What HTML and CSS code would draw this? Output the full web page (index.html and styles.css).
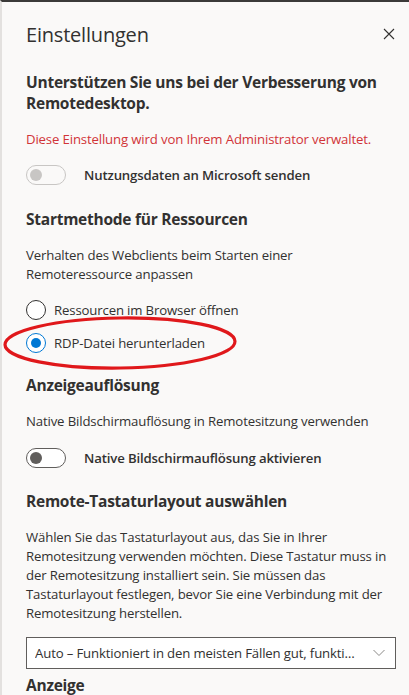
FILE: index.html
```html
<!DOCTYPE html>
<html lang="de">
<head>
<meta charset="utf-8">
<link rel="stylesheet" href="styles.css">
</head>
<body>
<div class="panel">
  <header class="head">
    <h1 class="title">Einstellungen</h1>
    <button class="close" aria-label="Schließen">
      <svg width="12" height="12" viewBox="0 0 12 12"><path d="M1 1L11 11M11 1L1 11" stroke="#323130" stroke-width="1.1" fill="none"/></svg>
    </button>
  </header>

  <h2 class="h">Unterstützen Sie uns bei der Verbesserung von Remotedesktop.</h2>
  <p class="warn">Diese Einstellung wird von Ihrem Administrator verwaltet.</p>
  <div class="toggle-row first">
    <span class="toggle disabled"><span class="thumb"></span></span>
    <span class="tlabel">Nutzungsdaten an Microsoft senden</span>
  </div>

  <h2 class="h">Startmethode für Ressourcen</h2>
  <p class="desc">Verhalten des Webclients beim Starten einer Remoteressource anpassen</p>
  <div class="radios">
    <div class="radio-row"><span class="radio"></span><span>Ressourcen im Browser öffnen</span></div>
    <div class="radio-row"><span class="radio checked"></span><span>RDP-Datei herunterladen</span>
      <svg class="ring" width="240" height="60" viewBox="0 0 240 60"><ellipse cx="118" cy="30" rx="115" ry="25" fill="none" stroke="#e0181b" stroke-width="3.2" transform="rotate(-0.8 118 30)"/></svg>
    </div>
  </div>

  <h2 class="h">Anzeigeauflösung</h2>
  <p class="desc">Native Bildschirmauflösung in Remotesitzung verwenden</p>
  <div class="toggle-row">
    <span class="toggle"><span class="thumb"></span></span>
    <span class="tlabel">Native Bildschirmauflösung aktivieren</span>
  </div>

  <h2 class="h">Remote-Tastaturlayout auswählen</h2>
  <p class="desc">Wählen Sie das Tastaturlayout aus, das Sie in Ihrer Remotesitzung verwenden möchten. Diese Tastatur muss in der Remotesitzung installiert sein. Sie müssen das Tastaturlayout festlegen, bevor Sie eine Verbindung mit der Remotesitzung herstellen.</p>
  <div class="select">
    <span class="sval">Auto – Funktioniert in den meisten Fällen gut, funkti…</span>
    <svg width="12" height="8" viewBox="0 0 12 8"><path d="M0.5 1L6 6.5L11.5 1" stroke="#8a8886" stroke-width="1" fill="none"/></svg>
  </div>

  <h2 class="h">Anzeige</h2>
</div>
</body>
</html>
```

FILE: styles.css
```css
html, body {
  margin: 0;
  padding: 0;
  height: 100%;
  overflow: hidden;
}
body {
  background: #faf9f8;
  font-family: "Open Sans", "Noto Sans", sans-serif;
  color: #323130;
  border-top: 2px solid #3b3a39;
  border-left: 2px solid #e3e1df;
  box-sizing: border-box;
}
.panel {
  padding: 0 13px 0 24px;
}
.head {
  display: flex;
  align-items: center;
  justify-content: space-between;
  height: 64px;
}
.title {
  margin: 0;
  font-size: 20px;
  font-weight: 400;
  letter-spacing: -0.2px;
}
.close {
  border: 0;
  background: transparent;
  padding: 0;
  width: 14px;
  height: 14px;
  display: flex;
  align-items: center;
  justify-content: center;
}
.h {
  margin: 6px 0 0;
  font-size: 15.5px;
  font-weight: 700;
  line-height: 21px;
  letter-spacing: -0.25px;
}
.warn {
  margin: 16px 0 0;
  font-size: 13.2px;
  line-height: 18px;
  color: #d13438;
  letter-spacing: -0.15px;
}
.desc {
  margin: 16px 0 0;
  font-size: 13.2px;
  line-height: 19px;
  letter-spacing: -0.15px;
}
.toggle-row {
  display: flex;
  align-items: center;
  gap: 18px;
  margin: 17px 0 23px;
  height: 20px;
}
.toggle-row.first {
  margin-bottom: 24px;
}
.toggle {
  box-sizing: border-box;
  width: 40px;
  height: 20px;
  border-radius: 10px;
  border: 1px solid #605e5c;
  background: #ffffff;
  display: flex;
  align-items: center;
  padding-left: 3px;
}
.toggle .thumb {
  width: 12px;
  height: 12px;
  border-radius: 50%;
  background: #605e5c;
}
.toggle.disabled {
  border-color: #c8c6c4;
  background: #faf9f8;
}
.toggle.disabled .thumb {
  background: #c8c6c4;
}
.tlabel {
  font-size: 13.2px;
  font-weight: 600;
  letter-spacing: -0.15px;
}
.radios {
  margin: 16px 0 22px;
  display: flex;
  flex-direction: column;
  gap: 13px;
}
.radio-row {
  position: relative;
  display: flex;
  align-items: center;
  gap: 8px;
  font-size: 13.2px;
  letter-spacing: -0.15px;
  height: 20px;
}
.radio {
  box-sizing: border-box;
  width: 20px;
  height: 20px;
  border-radius: 50%;
  border: 1px solid #323130;
  background: #ffffff;
  display: flex;
  align-items: center;
  justify-content: center;
}
.radio.checked {
  border-color: #0078d4;
}
.radio.checked::after {
  content: "";
  width: 10px;
  height: 10px;
  border-radius: 50%;
  background: #0078d4;
}
.ring {
  position: absolute;
  left: -24px;
  top: -20px;
  pointer-events: none;
}
.select {
  margin: 14px 0 5px;
  box-sizing: border-box;
  height: 32px;
  border: 1px solid #605e5c;
  background: #ffffff;
  display: flex;
  align-items: center;
  gap: 10px;
  padding: 0 10px 0 8px;
  font-size: 13.2px;
  letter-spacing: -0.15px;
}
.sval {
  flex: 1;
  min-width: 0;
  overflow: hidden;
  white-space: nowrap;
}
```
